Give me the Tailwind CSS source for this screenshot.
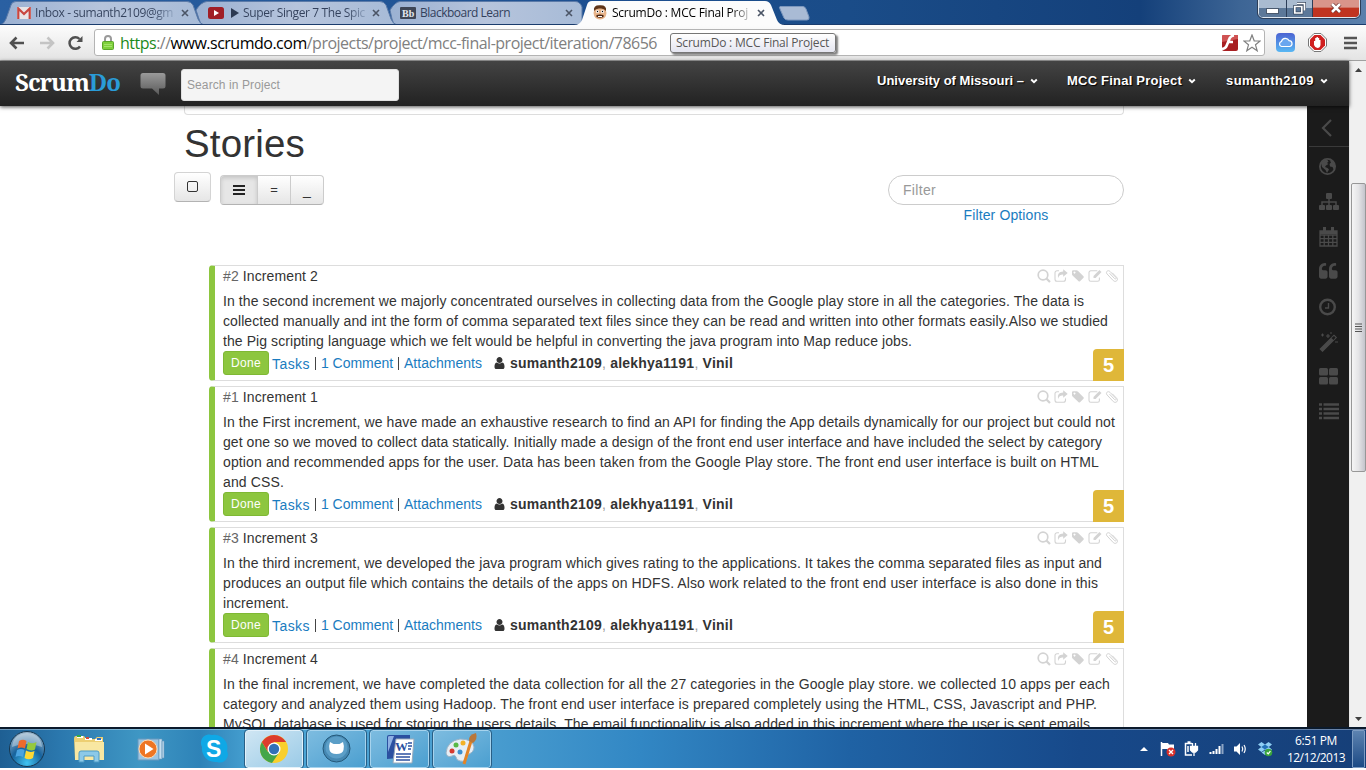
<!DOCTYPE html>
<html lang="en">
<head>
<meta charset="utf-8">
<title>ScrumDo : MCC Final Project</title>
<script src="https://cdn.jsdelivr.net/npm/@tailwindcss/browser@4"></script>
</head>
<body class="bg-white overflow-hidden">
<svg class="hidden">
  <symbol id="search" viewBox="0 0 14 14"><circle cx="6" cy="6" r="4.800" fill="none" stroke="currentColor" stroke-width="1.700"/><path d="M9.500 9.500L13 13" stroke="currentColor" stroke-width="2.200"/></symbol>
  <symbol id="share" viewBox="0 0 14 14"><path d="M5 1.800H3A2 2 0 0 0 1 3.800v6.400a2 2 0 0 0 2 2h6.500a2 2 0 0 0 2-2V8.500" fill="none" stroke="currentColor" stroke-width="1.100"/><path d="M9.200 0.300L13.700 4 9.200 7.700V5.400C6.500 5.300 5 6 4.300 9 3 5 5.200 2.600 9.200 2.500z"/></symbol>
  <symbol id="tag" viewBox="0 0 14 14"><path fill-rule="evenodd" d="M1 2.300Q1 1.200 2.100 1.200H5.700Q6.500 1.200 7.200 1.900L12.500 7.300Q13.100 8 12.500 8.700L9 12.300Q8.300 12.900 7.600 12.300L1.800 6.700Q1 6 1 5.300zM3.500 2.600a1 1 0 1 0 .01 0z"/></symbol>
  <symbol id="edit" viewBox="0 0 14 14"><path d="M9.300 1.800H2.800a1.800 1.800 0 0 0-1.800 1.800v6.800a1.800 1.800 0 0 0 1.800 1.800h6.800a1.800 1.800 0 0 0 1.800-1.800V8.500" fill="none" stroke="currentColor" stroke-width="1.100"/><path d="M11.400 1l2.100 2.100L7.600 9H5.500V6.900z"/></symbol>
  <symbol id="clip" viewBox="0 0 14 14"><path d="M4.500 4.200l5 5.300c1 1.200 2.300 0 1.300-1.200L5 2.400C3 .5.300 2.800 2 4.900l6.300 6.700c2.500 2.300 5.600-.8 3.400-3.200L7.300 3.800" fill="none" stroke="currentColor" stroke-width="1"/></symbol>
  <symbol id="user" viewBox="0 0 1792 1792"><path d="M1536 1399q0 109-62.500 187t-150.500 78h-854q-88 0-150.500-78t-62.500-187q0-85 8.500-160.500t31.500-152 58.500-131 94-89 134.500-34.500q131 128 313 128t313-128q76 0 134.500 34.500t94 89 58.500 131 31.500 152 8.500 160.500zm-256-887q0 159-112.500 271.500t-271.500 112.500-271.500-112.500-112.500-271.500 112.500-271.500 271.500-112.500 271.500 112.500 112.500 271.500z"/></symbol>
  <symbol id="close" viewBox="0 0 8 8"><path d="M1 1l6 6M7 1L1 7" stroke="#4b5566" stroke-width="1.600"/></symbol>
  <symbol id="caret" viewBox="0 0 8 6"><path d="M1.200 1.500L4 4.200 6.800 1.500" fill="none" stroke="#fff" stroke-width="1.900"/></symbol>
</svg>

<div class="w-[1366px] h-[768px] flex flex-col overflow-hidden font-['Liberation_Sans',sans-serif]">

  <!-- Tab strip -->
  <header class="relative h-[25px] shrink-0 bg-[linear-gradient(90deg,#2a60a2_0px,#1d4f90_600px,#1a4c88_850px,#14407a_1140px,#3d6595_1240px,#5b80ac_1366px)] font-['Open_Sans','Noto_Sans',sans-serif] text-[12px]">
    <svg class="absolute inset-0" width="1366" height="25">
      <defs><linearGradient id="tb" x1="0" y1="0" x2="1" y2="0"><stop offset="0" stop-color="#9bb1d2"/><stop offset=".5" stop-color="#b6c4dc"/><stop offset="1" stop-color="#a7bbd7"/></linearGradient></defs>
      <g fill="url(#tb)" stroke="#5b7aa8" stroke-width="1">
        <path d="M0 25Q4 24 6 19L11 5Q12 1.500 16 1.500H187Q191 1.500 193 5L198 19Q200 24 204 24.500z"/>
        <path d="M203 24.500Q200 24 199 19L196 10Q201 2 207 1.500H380Q384 1.500 386 5L391 19Q393 24 397 24.500z"/>
        <path d="M396 24.500Q393 24 392 19L390 10Q395 2 400 1.500H575Q580 1.500 582 7L582 24.500z"/>
      </g>
      <path d="M0 24.500H1366" stroke="#1a3c6d"/>
      <path d="M574 25Q580 25 582 20L587 5Q588 1 592 1H765Q769 1 771 5L777 20Q779 25 785 25z" fill="#fcfcfc"/>
      <path d="M780 6.500H803Q805 6.500 806 9L809 17Q809.500 20 807 20H788Q785 20 784 18L780 9Q779 6.500 780 6.500z" fill="#a9bbd5" stroke="#7c97bd"/>
    </svg>
    <div class="relative flex h-[25px] items-center text-[#33415c]">
      <div class="w-[199px] flex items-center pl-[17px]">
        <svg width="14" height="12" viewBox="0 0 14 12"><rect width="14" height="12" rx="1" fill="#e8e4e6"/><path d="M1.300 12V1.500L7 7l5.700-5.500V12" fill="none" stroke="#c9463f" stroke-width="2.200"/></svg>
        <span class="ml-[4px] w-[138px]"><span data-w="138" class="whitespace-nowrap inline-block bg-linear-to-r from-[#33415c] from-85% to-[#8fa3c0] bg-clip-text text-transparent">Inbox - sumanth2109@gm</span></span>
        <svg class="ml-[8px]" width="8" height="8"><use href="#close"/></svg>
      </div>
      <div class="w-[193px] flex items-center pl-[9px]">
        <svg width="16" height="12"><rect width="16" height="12" rx="2.500" fill="#a01e26"/><path d="M6 3l5 3-5 3z" fill="#fff"/></svg>
        <svg class="ml-[7px]" width="8" height="10"><path d="M0 0l8 5-8 5z" fill="#2b3952"/></svg>
        <span class="ml-[4px] w-[122px]"><span data-w="122" class="whitespace-nowrap inline-block bg-linear-to-r from-[#33415c] from-85% to-[#8fa3c0] bg-clip-text text-transparent">Super Singer 7 The Spic</span></span>
        <svg class="ml-[7px]" width="8" height="8"><use href="#close"/></svg>
      </div>
      <div class="w-[190px] flex items-center pl-[8px]">
        <svg width="16" height="12"><rect width="16" height="12" rx="1" fill="#3e4656"/><text x="2" y="10" font-size="10" font-weight="bold" font-family="Liberation Serif" fill="#e4e8ee">Bb</text></svg>
        <span class="ml-[4px] w-[137px]"><span data-w="90" class="whitespace-nowrap inline-block">Blackboard Learn</span></span>
        <svg class="ml-[8px]" width="8" height="8"><use href="#close"/></svg>
      </div>
      <div class="flex items-center pl-[11px] text-black">
        <svg width="14" height="15" viewBox="0 0 14 15"><path d="M1 6Q1 1 7 1t6 5l.5 2Q13 14 7 14.500 1 14 .5 8z" fill="#e8b48a"/><path d="M1 6Q0 0 7 .3 14 0 13 6 11 3 7 3.500 3 3 1 6z" fill="#5f3417"/><circle cx="4.500" cy="6.500" r="1.500" fill="#fff"/><circle cx="9.500" cy="6.500" r="1.500" fill="#fff"/><circle cx="4.500" cy="6.500" r=".7"/><circle cx="9.500" cy="6.500" r=".7"/><path d="M3.500 10Q7 9 10.500 10v2Q7 13.500 3.500 12z" fill="#472311"/><path d="M5 11h4v1H5z" fill="#fff"/></svg>
        <span class="ml-[5px] w-[137px]"><span data-w="136" class="whitespace-nowrap inline-block bg-linear-to-r from-black from-85% to-[#bbb] bg-clip-text text-transparent">ScrumDo : MCC Final Proj</span></span>
        <svg class="ml-[8px]" width="8" height="8"><use href="#close"/></svg>
      </div>
    </div>
    <div class="absolute left-[1258px] top-0 h-[18px] w-[102px] flex rounded-b-[5px] border border-t-0 border-[#dfe7f0] overflow-hidden outline outline-[#2c3e58]">
      <div class="w-[28px] bg-linear-to-b from-[#a9bbd0] from-45% to-[#5c7899] to-50% border-r border-[#2c3e58] flex justify-center pt-[9px]"><span class="h-[4px] w-[11px] bg-white outline outline-[#4b5a6e]"></span></div>
      <div class="w-[26px] bg-linear-to-b from-[#a9bbd0] from-45% to-[#5c7899] to-50% border-r border-[#2c3e58] flex justify-center pt-[2px]"><svg width="13" height="13"><path d="M4 1.500H11.500V8.500M1.800 4.500h7v6.500h-7z" fill="none" stroke="#37465c" stroke-width="3"/><path d="M4 1.500H11.500V8.500M1.800 4.500h7v6.500h-7z" fill="none" stroke="#fff" stroke-width="1.700"/></svg></div>
      <div class="flex-1 bg-linear-to-b from-[#d9958a] from-40% to-[#c03420] to-50% flex justify-center pt-[3px]"><svg width="12" height="10"><path d="M2 1l8 8M10 1L2 9" stroke="#6b2a26" stroke-width="4"/><path d="M2 1l8 8M10 1L2 9" stroke="#fff" stroke-width="2.600"/></svg></div>
    </div>
  </header>

  <!-- Toolbar -->
  <div class="h-[36px] shrink-0 flex items-center bg-linear-to-b from-[#fcfcfc] to-[#e4e4e4] border-b border-[#a0a0a0] pl-[9px] font-['Open_Sans','Noto_Sans',sans-serif]">
    <svg width="16" height="14"><path d="M15 7H2M7.500 1.500L2 7l5.500 5.500" fill="none" stroke="#505050" stroke-width="2.600"/></svg>
    <svg class="ml-[14px]" width="16" height="14"><path d="M1 7h13M8.500 1.500L14 7l-5.500 5.500" fill="none" stroke="#c4c4c4" stroke-width="2.600"/></svg>
    <svg class="ml-[12px]" width="17" height="16"><path d="M13 11.500A5.800 5.800 0 1 1 12.500 4" fill="none" stroke="#505050" stroke-width="2.500"/><path d="M15.500 1v6H9.500z" fill="#505050"/></svg>
    <div class="ml-[10px] w-[1171px] h-[27px] flex items-center rounded-[3px] border border-[#b4b4b4] bg-white relative">
      <svg class="ml-[7px]" width="12" height="15"><path d="M3 7V4a3 3 0 0 1 6 0V7" fill="none" stroke="#9a9a9a" stroke-width="2"/><rect x=".5" y="6.500" width="11" height="8" rx="1" fill="#7fd03c" stroke="#5ba52c"/><path d="M2 9.500h8M2 11.500h8" stroke="#a4e36c"/></svg>
      <span class="ml-[6px] w-[548px] text-[16px] leading-[22px]"><span data-w="537" class="whitespace-nowrap inline-block text-[#808080]"><span class="text-[#1b8a1b]">https</span>://<span class="text-black">www.scrumdo.com</span>/projects/project/mcc-final-project/iteration/78656</span></span>
      <span class="absolute left-[575px] top-[3px] w-[166px] h-[20px] rounded-[3px] border border-[#767676] bg-linear-to-b from-white to-[#e4e5f0] pl-[5px] text-[12px] leading-[18px] text-[#575757] shadow-[2px_2px_2px_rgba(0,0,0,.5)]"><span data-w="153" class="whitespace-nowrap inline-block">ScrumDo : MCC Final Project</span></span>
      <div class="ml-auto flex items-center gap-[4px] pr-[3px]">
        <svg width="18" height="18"><rect x="1" y="1" width="16" height="16" rx="2" fill="#a81f22"/><path d="M1 8V2q0-1 1-1h15v4z" fill="#cf5252"/><path d="M13 1.500Q9 2 8 6L5.500 12Q4.500 14.500 1 15M7 8h5" fill="none" stroke="#fff" stroke-width="2.700"/></svg>
        <svg width="18" height="18"><path d="M9 1l2.200 5.800 6 .2-4.700 3.800 1.700 6L9 13.300l-5.200 3.500 1.700-6L.8 7l6-.2z" fill="#fff" stroke="#808080" stroke-width="1.200"/></svg>
      </div>
    </div>
    <svg class="ml-[11px]" width="19" height="19"><defs><linearGradient id="ic" x2="0" y2="1"><stop stop-color="#4b63d2"/><stop offset="1" stop-color="#58b7f3"/></linearGradient></defs><rect width="19" height="19" rx="4" fill="url(#ic)"/><path d="M5.500 13.500a2.700 2.700 0 0 1 0-5.200 4 4 0 0 1 7.500-.7 3 3 0 0 1 .8 5.900z" fill="#6aa6ef" stroke="#fff" stroke-width="1.200"/></svg>
    <svg class="ml-[13px]" width="19" height="19"><path d="M6 .5h7L18.500 6v7L13 18.500H6L.5 13V6z" fill="#fff" stroke="#777"/><path d="M6.500 2h6L17 6.500v6L12.500 17h-6L2 12.500v-6z" fill="#d01f1f"/><path d="M6 8h1.200V5h1.300v-1h1.400v1h1.300v2h1.300v5q-.5 3-3 3-2.500-.3-3.500-3z" fill="#fff"/></svg>
    <svg class="ml-[17px]" width="13" height="14"><path d="M0 2h13M0 7h13M0 12h13" stroke="#555" stroke-width="2.600"/></svg>
  </div>

  <!-- Page viewport -->
  <div class="flex h-[666px] shrink-0">
    <div class="w-[1349px] flex flex-col">
      <nav class="relative z-10 h-[45px] shrink-0 flex items-center bg-linear-to-b from-[#444] to-[#222] shadow-[0_1px_4px_rgba(0,0,0,.7)] text-white text-[13px] font-bold">
        <div class="pl-[15px] w-[140px] text-[24px] font-bold leading-[30px] font-['Noto_Serif','DejaVu_Serif',serif] -mt-[3px]"><span data-w="105" class="whitespace-nowrap inline-block">Scrum<span class="text-[#2a9cd8]">Do</span></span></div>
        <svg width="26" height="26"><defs><linearGradient id="bub" x2="0" y2="1"><stop stop-color="#9a9a9a"/><stop offset="1" stop-color="#5a5a5a"/></linearGradient></defs><path d="M3 2H23Q25.500 2 25.500 4.500V15Q25.500 17.500 23 17.500H19V24L12 17.500H3Q.5 17.500 .5 15V4.500Q.5 2 3 2z" fill="url(#bub)"/></svg>
        <div class="ml-[15px] mt-[3px] w-[218px] h-[32px] rounded-[3px] bg-[#f4f4f4] border border-[#e0e0e0] pl-[5px] text-[12px] leading-[30px] font-normal text-[#999]"><span data-w="93" class="whitespace-nowrap inline-block">Search in Project</span></div>
        <div class="ml-auto mr-[21px] -mt-[6px] flex items-center [text-shadow:1px_1px_1px_#000]">
          <span data-w="147" class="whitespace-nowrap inline-block">University of Missouri –</span><svg class="ml-[6px] mr-[29px]" width="8" height="6"><use href="#caret"/></svg>
          <span data-w="115" class="whitespace-nowrap inline-block">MCC Final Project</span><svg class="ml-[6px] mr-[30px]" width="8" height="6"><use href="#caret"/></svg>
          <span data-w="88" class="whitespace-nowrap inline-block">sumanth2109</span><svg class="ml-[6px]" width="8" height="6"><use href="#caret"/></svg>
        </div>
      </nav>
      <div class="flex flex-1 min-h-0">
        <main class="w-[1307px] pl-[184px] text-[14px] leading-[20px] text-[#333] overflow-hidden">
          <div class="w-[940px] h-[9px] rounded-b-[4px] border border-t-0 border-[#ddd]"></div>
          <h1 class="mt-[9px] h-[40px] text-[38.500px] leading-[40px]"><span data-w="121" class="whitespace-nowrap inline-block">Stories</span></h1>
          <div class="-ml-[10px] mt-[8px] w-[950px] h-[93px] flex items-start">
            <div class="w-[37px] h-[30px] rounded-[4px] border border-[#d4d4d4] border-b-[#b3b3b3] bg-linear-to-b from-white to-[#e6e6e6] flex justify-center pt-[8px]"><span class="size-[11px] rounded-[2px] border border-[#333]"></span></div>
            <div class="ml-[9px] mt-[3px] flex w-[104px] h-[30px] rounded-[4px] border border-[#ccc] border-b-[#b3b3b3] overflow-hidden bg-linear-to-b from-white to-[#e6e6e6] text-[14px] leading-[28px] text-center">
              <div class="w-[37px] bg-[#e6e6e6] shadow-[inset_0_2px_4px_rgba(0,0,0,.15)] border-r border-[#ccc] flex items-center justify-center"><svg width="12" height="12"><path d="M0 2h12M0 6h12M0 10h12" stroke="#222" stroke-width="2"/></svg></div>
              <div class="w-[33px] border-r border-[#ccc] text-[13px]">=</div>
              <div class="flex-1">_</div>
            </div>
            <div class="ml-auto w-[236px] mt-[3px]">
              <div class="h-[30px] rounded-full border border-[#ccc] pl-[14px] leading-[28px] text-[#999]"><span data-w="33" class="whitespace-nowrap inline-block">Filter</span></div>
              <div class="text-center text-[#1a7cc0] h-[20px]"><span data-w="85" class="whitespace-nowrap inline-block">Filter Options</span></div>
            </div>
          </div>
          <section id="stories" class="ml-[25px] w-[915px] flex flex-col gap-[5px]"></section>
        </main>
        <aside class="w-[42px] bg-[#1b1b1b] flex flex-col text-[#4a4a4a]">
          <div class="h-[41px] border-b border-[#3a3a3a] ml-[2px] pl-[12px] pt-[13px]"><svg width="12" height="18"><path d="M10 1L2 9l8 8" fill="none" stroke="currentColor" stroke-width="2.200"/></svg></div>
          <div class="pl-[12px] pt-[10px] flex flex-col gap-[15px]">
            <svg width="20" height="20"><circle cx="8.500" cy="9.500" r="7.600" fill="none" stroke="currentColor" stroke-width="1.800"/><path d="M2 6Q4 2.500 8 2.500l1.500 2L8 6l1.500 1L7 8.500 6 10l2.500 1 1.500 1.500-2 3.500-1.500-3L3 10zM10.500 3l4 1.500L16.500 9l-1.500 4-1.500-3-2.500-.5-.5-2.500 1.500-1.500z" fill="currentColor"/></svg>
            <svg width="20" height="20" fill="currentColor"><rect x="7" y="1" width="6" height="6" rx="1"/><rect y="13" width="6" height="5" rx="1"/><rect x="7" y="13" width="6" height="5" rx="1"/><rect x="14" y="13" width="6" height="5" rx="1"/><path d="M10 6v8M3 14V10H17v4" fill="none" stroke="currentColor" stroke-width="1.500"/></svg>
            <svg width="20" height="20"><path d="M1 4h17v15H1zM1 8h17M1 11.700h17M1 15.300h17M5.200 8v11M9.500 8v11M13.800 8v11" fill="none" stroke="currentColor" stroke-width="1.300"/><path d="M1 4h17v3H1zM4 0h3v5H4zM12 0h3v5h-3z" fill="currentColor"/></svg>
            <svg width="20" height="20" viewBox="64 40 1792 1792" fill="currentColor"><path id="q" d="M832 960v384q0 80-56 136t-136 56h-384q-80 0-136-56t-56-136v-704q0-104 40.500-198.500t109.500-163.500 163.500-109.500 198.500-40.500h64q26 0 45 19t19 45v128q0 26-19 45t-45 19h-64q-106 0-181 75t-75 181v32q0 40 28 68t68 28h224q80 0 136 56t56 136z"/><use href="#q" x="896"/></svg>
            <svg width="20" height="20"><circle cx="8.500" cy="10" r="7.300" fill="none" stroke="currentColor" stroke-width="2.400"/><path d="M9.500 6v5H6" fill="none" stroke="currentColor" stroke-width="1.400"/></svg>
            <svg width="20" height="20"><path d="M1.500 17L15 3.500l2 2L3.500 19z" fill="currentColor" stroke="currentColor" stroke-width="1.500"/><path d="M12.500 6l2 2L16.500 5.500l-1.500-1.500z" fill="#1b1b1b"/><path d="M2 3h3M3.500 1.500v3M7 4h4M9 2v4M16 10h3M11 1h2" stroke="currentColor" stroke-width="1.100"/></svg>
            <svg width="20" height="20" fill="currentColor"><rect y="1" width="9" height="7.500" rx="1.500"/><rect x="10" y="1" width="9" height="7.500" rx="1.500"/><rect y="10" width="9" height="7.500" rx="1.500"/><rect x="10" y="10" width="9" height="7.500" rx="1.500"/></svg>
            <svg width="20" height="20"><path d="M0 2.500h3M4.500 2.500H20M0 7h3M4.500 7H20M0 11.500h3M4.500 11.500H20M0 16h3M4.500 16H20" stroke="currentColor" stroke-width="2.600"/></svg>
          </div>
        </aside>
      </div>
    </div>
    <!-- Scrollbar -->
    <div class="w-[17px] bg-[#f0f0f0] border-l border-[#e6e6e6] flex flex-col items-center pb-[6px]">
      <svg class="mt-[7px]" width="7" height="4"><path d="M0 4L3.500 0 7 4z" fill="#404040"/></svg>
      <div class="mt-[111px] w-[15px] h-[289px] rounded-[2px] border border-[#979797] bg-linear-to-r from-[#f5f5f5] via-[#e4e4e6] to-[#c4c4cc] flex items-center justify-center"><svg width="7" height="9"><path d="M0 1h7M0 3.500h7M0 6h7M0 8.500h7" stroke="#555"/></svg></div>
      <svg class="mt-auto" width="7" height="4"><path d="M0 0h7L3.500 4z" fill="#404040"/></svg>
    </div>
  </div>

  <!-- Taskbar -->
  <footer class="h-[41px] shrink-0 flex items-center border-t-2 border-[#0b1a2c] bg-[linear-gradient(90deg,#1e5f93_0px,#2b78ae_60px,#3f97c4_140px,#2e83b8_200px,#4ba6d6_260px,#4a9ed0_480px,#3287c4_640px,#1f62a4_850px,#17498a_1080px,#163f78_1366px)] shadow-[inset_0_1px_0_rgba(255,255,255,.35)]">
    <svg class="ml-[8px]" width="38" height="38" viewBox="0 0 38 38"><defs><radialGradient id="orb" cx=".5" cy=".9" r=".9"><stop stop-color="#41c4f2"/><stop offset=".5" stop-color="#17629c"/><stop offset="1" stop-color="#a0b9cc"/></radialGradient></defs><circle cx="19" cy="19" r="17.500" fill="url(#orb)" stroke="#16364f"/><path d="M4 17Q5 4 19 3 33 4 34 17 18 11 4 17z" fill="#fff" opacity=".35"/><path d="M11 11q4-2.500 7.500 0l-1.500 7.500q-4-2-7.500 0z" fill="#ee6a2c"/><path d="M20 12q4 2.500 8.500 0L27 19.500q-4 2-8.500-.5z" fill="#95c93d"/><path d="M9 20q4-2 7.500 0L15 27q-4-2-7.500 0z" fill="#4aa3e0"/><path d="M18 20.500q4 2.500 8.500.5L25 28q-4 2.500-8.500 0z" fill="#fdd835"/></svg>
    <svg class="ml-[27px]" width="32" height="32" viewBox="0 0 32 32"><path d="M1 6q0-3 2-3h8l2 3h9l2-2h6v22H2z" fill="#edcf72"/><path d="M2 9h29v18H2z" fill="#f8e7a2"/><path d="M4 3h6v2H4zM12 5h7v2h-7zM22 6h7v2h-7z" fill="#fff"/><path d="M4 2h4v2H4z" fill="#37a845"/><path d="M13 4h3v2h-3z" fill="#d64a37"/><path d="M24 5h4v2h-4z" fill="#2e72c6"/><path d="M6 29v-9q0-2 2-2h16q2 0 2 2v9h-5v-6H11v6z" fill="#8cc9e8" stroke="#4d9bc5"/></svg>
    <svg class="ml-[32px]" width="29" height="28" viewBox="0 0 29 28"><path d="M1 4h21v21H1z" fill="#9dc5e2" stroke="#6798bd"/><path d="M22 4h3v20h-3zM25 6h2v17h-2z" fill="#c6dff0" stroke="#6798bd" stroke-width=".6"/><circle cx="11" cy="14" r="9" fill="#ee7523" stroke="#ffd9b0"/><path d="M8 8.500l8.500 5.500L8 19.500z" fill="#fff"/></svg>
    <svg class="ml-[33px]" width="31" height="31"><path d="M2 9a8 8 0 0 1 11-7 13 13 0 0 1 15 16 8 8 0 0 1-10 11A13.500 13.500 0 0 1 3 14 8 8 0 0 1 2 9z" fill="#0fa8e6"/><text x="7" y="24" font-family="Liberation Sans" font-size="23" font-weight="bold" fill="#fff">S</text></svg>
    <div class="ml-[15px] flex gap-[4px]">
      <div class="w-[58px] h-[38px] rounded-[3px] border border-[#e2f1fa] outline outline-[#285f86] bg-linear-to-br from-[#cfe6f3] to-[#9bcbe7] flex items-center justify-center"><svg width="30" height="30" viewBox="0 0 30 30"><circle cx="15" cy="15" r="14" fill="#f9cf2c"/><path d="M2.900 8A14 14 0 0 0 13 28.900L20.500 18 15 15 9 18z" fill="#44a64a"/><path d="M2.900 8A14 14 0 0 1 27.100 8H15L8.500 17z" fill="#dc3c2d"/><circle cx="15" cy="15" r="6.500" fill="#fff"/><circle cx="15" cy="15" r="5.200" fill="#3170b8"/></svg></div>
      <div class="w-[59px] h-[38px] rounded-[3px] border border-[#a6d3ed] outline outline-[#285f86] bg-linear-to-br from-[#7dbce0] to-[#4a9fd0] flex items-center justify-center"><svg width="29" height="29"><circle cx="14.500" cy="14.500" r="13.500" fill="#4588b2" stroke="#245879"/><circle cx="14.500" cy="13.500" r="11" fill="#5b9ec7"/><path d="M8 8l3.500 2h6L21 8q1.500 4 .5 8-1 4-7 4t-7-4Q6.500 12 8 8z" fill="#fff"/></svg></div>
      <div class="w-[59px] h-[38px] rounded-[3px] border border-[#a6d3ed] outline outline-[#285f86] bg-linear-to-br from-[#7dbce0] to-[#4a9fd0] flex items-center justify-center"><svg width="30" height="30"><path d="M2 3q0-2 2-2h21v22L2 25z" fill="#2b50a0"/><path d="M3 3q0-1 2-1h4L3 18z" fill="#8eb0e4"/><path d="M11 5h18l-2 24H8z" fill="#fff" stroke="#9ab"/><path d="M23 9h4M23 12h4M23 15h3M11 20h15M11 23h14M11 26h14" stroke="#2b50a0" stroke-width="1.500"/><text x="10" y="17" font-family="Liberation Serif" font-weight="bold" font-size="13" fill="#2b50a0">W</text></svg></div>
      <div class="w-[58px] h-[38px] rounded-[3px] border border-[#a6d3ed] outline outline-[#285f86] bg-linear-to-br from-[#7dbce0] to-[#4a9fd0] flex items-center justify-center"><svg width="34" height="32"><path d="M1 20Q2 8 15 6q13 0 14 8 0 5-5 7-2 1-2 4-1 4-7 3-4-1-4-4-1-3-4-1-5 2-6-3z" fill="#e6eef5" stroke="#9bb3c5"/><circle cx="7" cy="18" r="2.500" fill="#d63a30"/><circle cx="11" cy="12" r="2.500" fill="#58b947"/><circle cx="18" cy="10" r="2.500" fill="#f3b126"/><circle cx="15" cy="19" r="2.500" fill="#3c8fd0"/><path d="M19 31L26 8" stroke="#e48425" stroke-width="3"/><path d="M24 8Q23 2 31 0q2 6-3 10z" fill="#b9773a"/></svg></div>
    </div>
    <div class="ml-auto flex items-center text-white h-full">
      <svg width="8" height="4"><path d="M0 4L4 0l4 4z" fill="#fff"/></svg>
      <svg class="ml-[12px]" width="16" height="16"><path d="M1.500 1v14" stroke="#fff" stroke-width="1.500"/><path d="M2 2h6l1 1.500h5V9H8L7 8H2z" fill="#fff"/><circle cx="11" cy="11" r="4.500" fill="#d9302a"/><path d="M9 9l4 4M13 9l-4 4" stroke="#fff" stroke-width="1.300"/></svg>
      <svg class="ml-[8px]" width="16" height="16"><path d="M8 2.500H1.500V14H8M3.500 1h3M4 5v6" fill="none" stroke="#fff" stroke-width="1.500"/><path d="M6.500 5.500h7v3.500l-2 2h-3l-2-2zM8.500 2V5M11.500 2V5M10 11v4" fill="#fff" stroke="#fff" stroke-width="1.300"/></svg>
      <svg class="ml-[9px]" width="16" height="14"><path d="M1.500 10v2M4.500 9v3M7.500 7v5M10.500 4v8" stroke="#fff" stroke-width="2"/><path d="M13.500 2v10" stroke="#8ca4c4" stroke-width="2"/></svg>
      <svg class="ml-[8px]" width="16" height="14"><path d="M1 4.500h2.500L7 1v12L3.500 9.500H1z" fill="#fff"/><path d="M9 4.500q1.500 2.500 0 5M11 3q2.500 4 0 8" fill="none" stroke="#fff" stroke-width="1.200"/></svg>
      <svg class="ml-[8px]" width="17" height="16"><path d="M4.500 1L8 3.500 11.500 1 15 3.500 11.800 6 15 8.500 11.500 11 8 8.500 4.500 11 1 8.500 4.300 6 1 3.500zM4.500 11.500L8 9.500l3.500 2L8 14z" fill="#8fd0f5"/><path d="M8 3.500L11.800 6 8 8.500 4.300 6z" fill="#2272b8"/><circle cx="11.500" cy="11.500" r="3.800" fill="#3aa53d"/><path d="M9.800 11.500l1.400 1.400 2.200-2.800" fill="none" stroke="#fff" stroke-width="1.200"/></svg>
      <div class="ml-[13px] w-[58px] text-center font-['Open_Sans','Noto_Sans',sans-serif] text-[12px] leading-[17px]"><span data-w="42" class="whitespace-nowrap inline-block">6:51 PM</span><br><span data-w="58" class="whitespace-nowrap inline-block">12/12/2013</span></div>
      <div class="ml-[7px] w-[13px] h-[38px] mr-px border border-[#7d9cc2] bg-linear-to-b from-[#5d83b0] to-[#1c4a85] rounded-[1px]"></div>
    </div>
  </footer>
</div>

<script>
const stories = [
  {n: 2, lines: [
    ['In the second increment we majorly concentrated ourselves in collecting data from the Google play store in all the categories. The data is', 861],
    ['collected manually and int the form of comma separated text files since they can be read and written into other formats easily.Also we studied', 885],
    ['the Pig scripting language which we felt would be helpful in converting the java program into Map reduce jobs.', 689]]},
  {n: 1, lines: [
    ['In the First increment, we have made an exhaustive research to find an API for finding the App details dynamically for our project but could not', 892],
    ['get one so we moved to collect data statically. Initially made a design of the front end user interface and have included the select by category', 879],
    ['option and recommended apps for the user. Data has been taken from the Google Play store. The front end user interface is built on HTML', 876],
    ['and CSS.', 61]]},
  {n: 3, lines: [
    ['In the third increment, we developed the java program which gives rating to the applications. It takes the comma separated files as input and', 879],
    ['produces an output file which contains the details of the apps on HDFS. Also work related to the front end user interface is also done in this', 875],
    ['increment.', 66]]},
  {n: 4, lines: [
    ['In the final increment, we have completed the data collection for all the 27 categories in the Google play store. we collected 10 apps per each', 887],
    ['category and analyzed them using Hadoop. The front end user interface is prepared completely using the HTML, CSS, Javascript and PHP.', 874],
    ['MySQL database is used for storing the users details. The email functionality is also added in this increment where the user is sent emails', 867]]}
];
document.getElementById('stories').innerHTML = stories.map(s => `
  <article class="relative rounded-l-[4px] border border-l-[6px] border-[#ddd] border-l-[#8dc63f] pl-[8px] pb-[5px]">
    <div class="flex items-center h-[20px]">
      <span data-w="95" class="whitespace-nowrap inline-block"><span class="text-[#666]">#${s.n}</span> Increment ${s.n}</span>
      <div class="ml-auto mr-[4px] flex items-center gap-[3px] text-[#d3d3d3]">
        <svg width="14" height="14" fill="currentColor"><use href="#search"/></svg>
        <svg width="14" height="14" fill="currentColor"><use href="#share"/></svg>
        <svg width="14" height="14" fill="currentColor"><use href="#tag"/></svg>
        <svg width="14" height="14" fill="currentColor"><use href="#edit"/></svg>
        <svg width="14" height="14" fill="currentColor"><use href="#clip"/></svg>
      </div>
    </div>
    <div class="mt-[5px]">${s.lines.map(l => `<div class="h-[20px]"><span data-w="${l[1]}" class="whitespace-nowrap inline-block">${l[0]}</span></div>`).join('')}</div>
    <div class="flex items-center h-[24px]">
      <span class="w-[46px] h-[24px] rounded-[3px] bg-[#8dc63f] border border-[#7fb834] text-white text-[12px] leading-[22px] text-center"><span data-w="30" class="whitespace-nowrap inline-block">Done</span></span>
      <span data-w="38" class="whitespace-nowrap inline-block ml-[3px] mt-[2px] text-[#1a7cc0]">Tasks</span>
      <span class="ml-[5px] w-px h-[13px] bg-[#444]"></span>
      <span data-w="72" class="whitespace-nowrap inline-block ml-[5px] text-[#1a7cc0]">1 Comment</span>
      <span class="ml-[5px] w-px h-[13px] bg-[#444]"></span>
      <span data-w="78" class="whitespace-nowrap inline-block ml-[5px] text-[#1a7cc0]">Attachments</span>
      <svg class="ml-[10px]" width="15" height="14" viewBox="0 0 1792 1792" fill="#333"><use href="#user"/></svg>
      <span data-w="223" class="whitespace-nowrap inline-block ml-[3px] font-bold">sumanth2109<span class="font-normal text-[#999]">,</span> alekhya1191<span class="font-normal text-[#999]">,</span> Vinil</span>
    </div>
    <span class="absolute right-[-1px] bottom-[-1px] w-[31px] h-[32px] rounded-tl-[4px] bg-[#dfb739] text-white font-bold text-[20px] leading-[32px] text-center">5</span>
  </article>`).join('');

// Spread each run of text evenly over its column width, once styles are in force.
function fit() {
  document.querySelectorAll('[data-w]').forEach(el => {
    el.style.letterSpacing = '0px';
    const gap = (el.dataset.w - el.getBoundingClientRect().width) / el.textContent.length;
    el.style.letterSpacing = gap + 'px';
  });
}
fit();
window.addEventListener('load', () => { fit(); requestAnimationFrame(fit); setTimeout(fit, 50); });
</script>
</body>
</html>
